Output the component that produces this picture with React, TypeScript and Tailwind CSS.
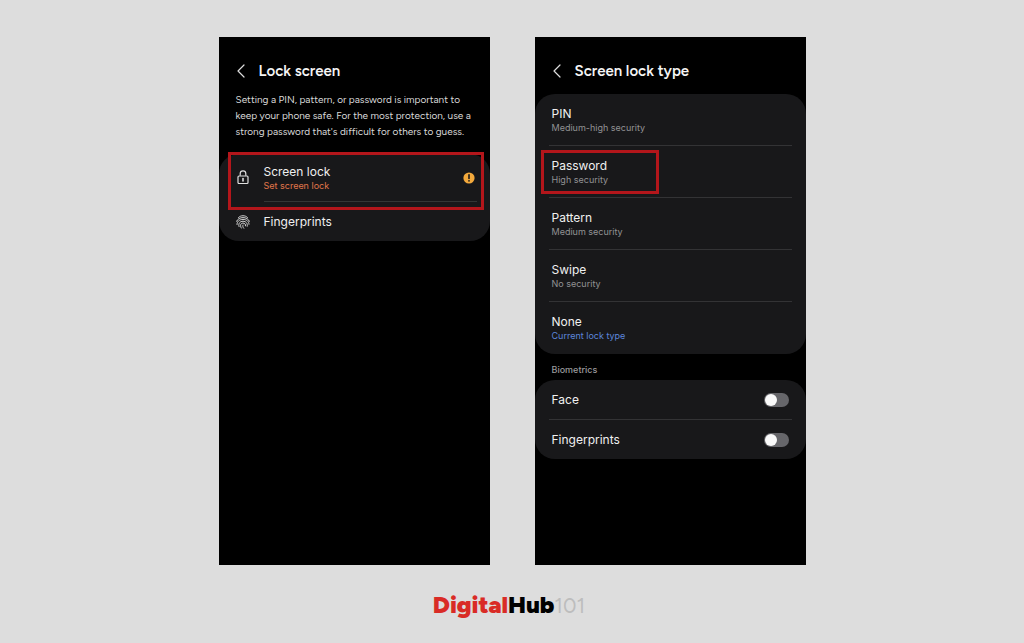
import type { ReactNode } from "react";

function Phone({ title, children }: { title: string; children: ReactNode }) {
  return (
    <section className="min-h-[528px] min-w-0 bg-black">
      <header className="flex h-[57px] items-center gap-3 px-4 pt-[10px]">
        <button type="button" aria-label="Back" className="flex h-5 w-3 items-center justify-center text-[#dedede]">
          <svg viewBox="0 0 12 16" className="h-4 w-3" fill="none" stroke="currentColor" strokeWidth="1.2" strokeLinecap="round" strokeLinejoin="round">
            <path d="M9 2 3 8l6 6" />
          </svg>
        </button>
        <h1 className="font-['Figtree','Inter',sans-serif] text-[15px] leading-5 font-semibold text-[#f5f5f5]">{title}</h1>
      </header>
      {children}
    </section>
  );
}

function LockIcon() {
  return (
    <svg viewBox="0 0 14 16" className="h-4 w-[14px]" fill="none" stroke="#e0e0e0" strokeWidth="1.2" strokeLinejoin="round">
      <rect x="2" y="6" width="10" height="7.5" rx="1" />
      <path d="M4.2 5.8V3.600a2.800 2.800 0 0 1 5.600 0v2.200" />
      <path d="M7 8.600v2.400" strokeWidth="1.6" strokeLinecap="round" />
    </svg>
  );
}

function FingerprintIcon() {
  return (
    <svg viewBox="0 0 28 28" className="h-[14px] w-[14px]" fill="none" stroke="#dedede" strokeWidth="1.9" strokeLinecap="round">
      <path d="M5 5C7.500 2.500 10.500 1.500 14 1.500S20.500 2.500 23 5" />
      <path d="M1.200 12.500C3.200 7.800 8.300 5.200 14 5.200s10.800 2.600 12.800 7.300" />
      <path d="M2 19C1.800 13 7 8.800 14 8.800S26.200 13 26 18.500" />
      <path d="M6 23C4 16.500 8.500 12.500 14 12.500s9.800 4 8.500 10" />
      <path d="M10.500 26C7.500 20.500 9.500 16.200 14 16.200c4 0 5.500 2.600 5 5.500" />
      <path d="M15.500 26.500c-2-2.500-2.500-4.500-1.500-6.500" />
    </svg>
  );
}

function WarningIcon() {
  return (
    <svg viewBox="0 0 12 12" className="h-3 w-3" role="img" aria-label="Attention">
      <circle cx="6" cy="6" r="5.6" fill="#f3a93c" />
      <path d="M6 2.800v3.600" stroke="#18181a" strokeWidth="1.6" strokeLinecap="round" />
      <circle cx="6" cy="8.8" r="0.9" fill="#18181a" />
    </svg>
  );
}

const lockTypes = [
  { name: "PIN", detail: "Medium-high security" },
  { name: "Password", detail: "High security", marked: true },
  { name: "Pattern", detail: "Medium security" },
  { name: "Swipe", detail: "No security" },
  { name: "None", detail: "Current lock type", current: true },
];

const biometrics = ["Face", "Fingerprints"];

export default function App() {
  return (
    <main className="flex min-h-screen flex-col items-center bg-[#dddddd] pt-[37px] font-['Inter',sans-serif]">
      <div className="grid w-full max-w-[587px] grid-cols-2 gap-[45px]">
        <Phone title="Lock screen">
          <p className="-mt-[2px] px-[17px] font-['Figtree','Roboto',sans-serif] text-[10px] leading-4 whitespace-nowrap text-[#d8d8d8]">
            Setting a PIN, pattern, or password is important to
            <br />
            keep your phone safe. For the most protection, use a
            <br />
            strong password that's difficult for others to guess.
          </p>
          <div className="relative mt-[14px] rounded-[20px] bg-[#18181a]">
            <button type="button" className="flex w-full items-stretch gap-[14px] pr-[13px] pl-[17px] text-left">
              <span className="flex w-[14px] items-center">
                <LockIcon />
              </span>
              <span className="flex h-12 grow items-center justify-between border-b border-[#333635] pr-[2px]">
                <span className="flex flex-col">
                  <span className="text-xs leading-4 text-[#f0f0f0]">Screen lock</span>
                  <span className="text-[9px] leading-3 text-[#e0764a]">Set screen lock</span>
                </span>
                <WarningIcon />
              </span>
            </button>
            <button type="button" className="flex h-[39px] w-full items-center gap-[14px] px-[17px] text-left">
              <FingerprintIcon />
              <span className="text-xs leading-4 text-[#f0f0f0]">Fingerprints</span>
            </button>
            <div className="pointer-events-none absolute -top-[2px] right-[6px] left-[9px] h-[58px] border-[3px] border-[#b3161b]" />
          </div>
        </Phone>

        <Phone title="Screen lock type">
          <ul className="rounded-[20px] bg-[#18181a] px-[14px]">
            {lockTypes.map((type) => (
              <li key={type.name} className="relative h-[52px] border-b border-[#333335] last:border-b-0">
                <button type="button" className="flex h-full w-full flex-col justify-center px-[3px] text-left">
                  <span className="text-xs leading-4 text-[#f0f0f0]">{type.name}</span>
                  <span className={type.current ? "text-[9px] leading-3 text-[#5c86dc]" : "text-[9px] leading-3 text-[#929294]"}>
                    {type.detail}
                  </span>
                </button>
                {type.marked && (
                  <div className="pointer-events-none absolute top-1 -left-2 h-11 w-[118px] border-[3px] border-[#b3161b]" />
                )}
              </li>
            ))}
          </ul>
          <h2 className="px-[17px] pt-[10px] pb-1 text-[9px] leading-3 font-medium text-[#9a9a9c]">Biometrics</h2>
          <ul className="rounded-[20px] bg-[#18181a] px-[14px]">
            {biometrics.map((name) => (
              <li key={name} className="border-b border-[#333335] last:border-b-0">
                <label className="flex h-[39px] items-center justify-between px-[3px] text-xs leading-4 text-[#f0f0f0]">
                  {name}
                  <input
                    type="checkbox"
                    role="switch"
                    className="flex h-[14px] w-[25px] appearance-none items-center rounded-full bg-[#66666a] px-px before:h-3 before:w-3 before:rounded-full before:bg-[#fafafa] before:content-[''] checked:justify-end checked:bg-[#4a7be0]"
                  />
                </label>
              </li>
            ))}
          </ul>
        </Phone>
      </div>

      <footer className="mt-[26px] flex items-baseline pr-[6px] font-['Figtree','Inter',sans-serif] text-2xl leading-7">
        <span className="font-black text-[#d92b26]">Digital</span>
        <span className="font-black text-black">Hub</span>
        <span className="text-[21px] text-[#bdbdbd]">101</span>
      </footer>
    </main>
  );
}
